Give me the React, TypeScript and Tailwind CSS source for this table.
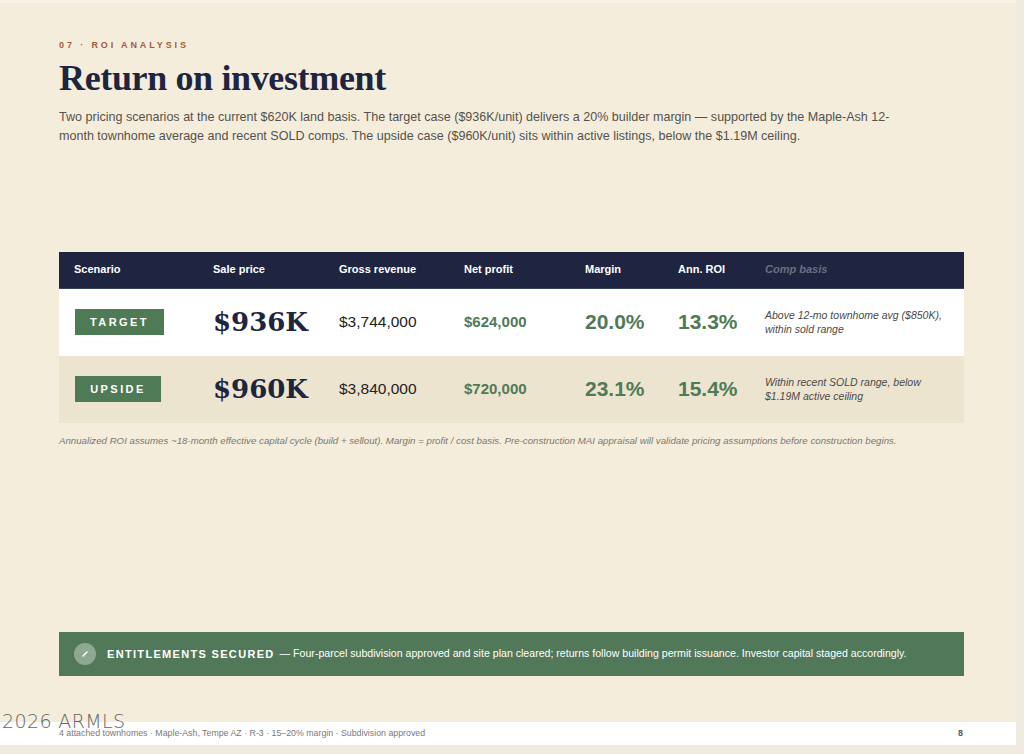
export default function App() {
  const sans = { fontFamily: '"Liberation Sans", Arial, sans-serif' }
  const serif = { fontFamily: '"Liberation Serif", "Times New Roman", serif' }
  const priceSerif = { fontFamily: '"DejaVu Serif", Georgia, serif' }

  const rows = [
    {
      badge: "TARGET",
      price: "$936K",
      gross: "$3,744,000",
      net: "$624,000",
      margin: "20.0%",
      roi: "13.3%",
      comp: ["Above 12-mo townhome avg ($850K),", "within sold range"],
      bg: "bg-white",
      badgeW: "w-[89px]",
    },
    {
      badge: "UPSIDE",
      price: "$960K",
      gross: "$3,840,000",
      net: "$720,000",
      margin: "23.1%",
      roi: "15.4%",
      comp: ["Within recent SOLD range, below", "$1.19M active ceiling"],
      bg: "bg-[#ede4cf]",
      badgeW: "w-[86px]",
    },
  ]

  return (
    <div className="w-[1024px] h-[754px] bg-[#efebe0] overflow-hidden relative" style={sans}>
      <div className="w-[1016px] h-[722px] bg-[#f5eddc] border-t-[3px] border-[#f8f3e6] pl-[59px] pr-[52px] pt-[36px] flex flex-col">
        <div className="text-[9px] font-bold tracking-[0.32em] text-[#a45a3c]">07 · ROI ANALYSIS</div>
        <h1 className="mt-[5px] text-[36px] leading-[40px] font-bold text-[#1e2540] tracking-[-0.01em]" style={serif}>
          Return on investment
        </h1>
        <p className="mt-[10px] w-[870px] text-[12.55px] leading-[19.5px] text-[#54524c]">
          Two pricing scenarios at the current $620K land basis. The target case ($936K/unit) delivers a 20% builder margin — supported by the Maple-Ash 12-
          <br />
          month townhome average and recent SOLD comps. The upside case ($960K/unit) sits within active listings, below the $1.19M ceiling.
        </p>

        <div className="mt-[105px] w-[905px]">
          <div className="h-[37px] bg-[#1f2541] flex items-center text-[11px] font-bold text-white border-b border-[#3a4160]">
            <div className="w-[154px] pl-[15px]">Scenario</div>
            <div className="w-[126px]">Sale price</div>
            <div className="w-[125px]">Gross revenue</div>
            <div className="w-[121px]">Net profit</div>
            <div className="w-[93px]">Margin</div>
            <div className="w-[87px]">Ann. ROI</div>
            <div className="flex-1 italic text-[#6b6f80]">Comp basis</div>
          </div>
          {rows.map((r) => (
            <div key={r.badge} className={`h-[67px] flex items-center ${r.bg}`}>
              <div className="w-[154px] pl-[16px]">
                <div
                  className={`${r.badgeW} h-[26px] bg-[#4f7a56] text-white text-[11px] font-bold tracking-[0.22em] flex items-center justify-center`}
                >
                  {r.badge}
                </div>
              </div>
              <div className="w-[126px] text-[26px] font-bold text-[#1e2540]" style={priceSerif}>
                {r.price}
              </div>
              <div className="w-[125px] text-[15.5px] text-[#222]">{r.gross}</div>
              <div className="w-[121px] text-[15px] font-bold text-[#4f7a56]">{r.net}</div>
              <div className="w-[93px] text-[21px] font-bold text-[#4f7a56]">{r.margin}</div>
              <div className="w-[87px] text-[21px] font-bold text-[#4f7a56]">{r.roi}</div>
              <div className="flex-1 text-[10.5px] leading-[14px] italic text-[#4a4a48]">
                {r.comp[0]}
                <br />
                {r.comp[1]}
              </div>
            </div>
          ))}
        </div>
        <p className="mt-[11px] text-[9.7px] italic text-[#7a776f]">
          Annualized ROI assumes ~18-month effective capital cycle (build + sellout). Margin = profit / cost basis. Pre-construction MAI appraisal will validate pricing assumptions before construction begins.
        </p>

        <div className="mt-[184px] w-[905px] h-[44px] bg-[#52785a] flex items-center pl-[15px] text-white">
          <div className="w-[22px] h-[22px] rounded-full bg-[#8fa891] flex items-center justify-center">
            <svg width="10" height="10" viewBox="0 0 10 10" fill="none">
              <path d="M3 7 L7 3" stroke="white" strokeWidth="1.4" strokeLinecap="round" />
            </svg>
          </div>
          <span className="ml-[11px] text-[11px] font-bold tracking-[0.12em]">ENTITLEMENTS SECURED</span>
          <span className="ml-[5px] text-[10.6px]">— Four-parcel subdivision approved and site plan cleared; returns follow building permit issuance. Investor capital staged accordingly.</span>
        </div>
      </div>

      <div className="w-[1016px] h-[23px] bg-white flex items-center justify-between pl-[59px] pr-[53px] text-[8.8px] text-[#7a7a7a]">
        <span>4 attached townhomes · Maple-Ash, Tempe AZ · R-3 · 15–20% margin · Subdivision approved</span>
        <span className="font-bold text-[#555]">8</span>
      </div>

      <div
        className="absolute left-[2px] top-[707px] text-[19px] tracking-[0.02em] text-[#666]"
        style={{ fontFamily: '"DejaVu Sans", sans-serif', fontWeight: 200 }}
      >
        2026 ARMLS
      </div>
    </div>
  )
}
